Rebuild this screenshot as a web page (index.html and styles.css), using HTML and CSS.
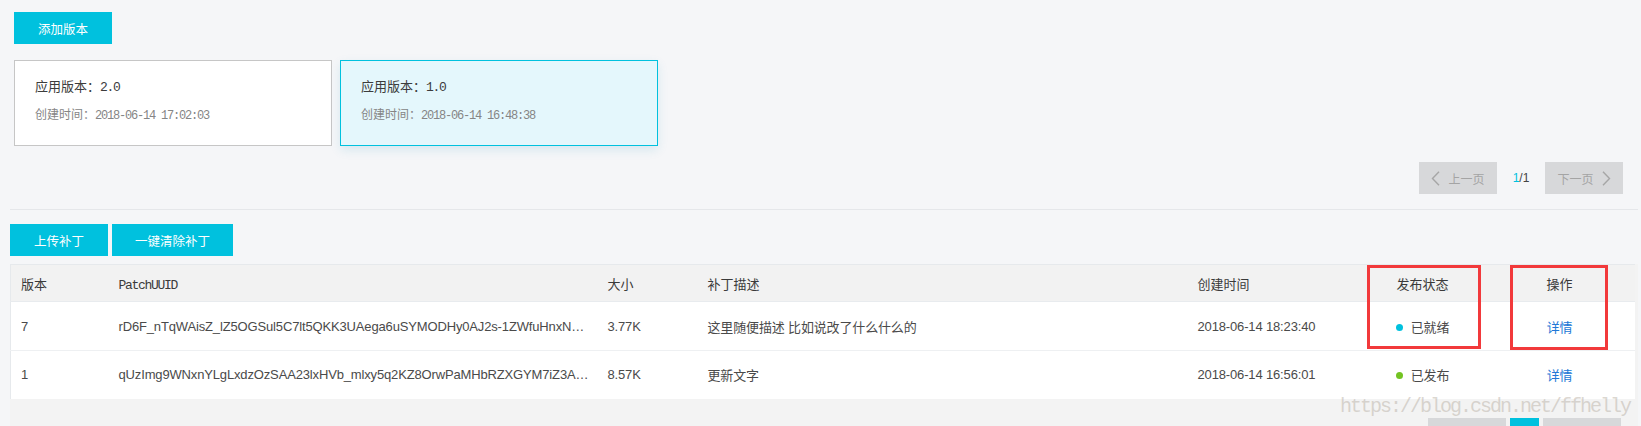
FILE: index.html
```html
<!DOCTYPE html>
<html lang="zh-CN">
<head>
<meta charset="utf-8">
<title>版本管理</title>
<link rel="stylesheet" href="styles.css">
</head>
<body>
<div class="page">
  <section class="versions">
    <button class="btn btn-add">添加版本</button>
    <div class="cards">
      <div class="card">
        <div class="card-title">应用版本：<span class="num">2.0</span></div>
        <div class="card-time">创建时间：<span class="num">2018-06-14 17:02:03</span></div>
      </div>
      <div class="card card-active">
        <div class="card-title">应用版本：<span class="num">1.0</span></div>
        <div class="card-time">创建时间：<span class="num">2018-06-14 16:48:38</span></div>
      </div>
    </div>
  </section>

  <div class="pager pager-top">
    <button class="pg-btn"><svg class="chev" width="9" height="15" viewBox="0 0 9 15"><path d="M8 0.8 L1.5 7.5 L8 14.2" fill="none" stroke="#a6a6a6" stroke-width="1.4"/></svg><span>上一页</span></button>
    <span class="pg-count"><em>1</em>/1</span>
    <button class="pg-btn"><span>下一页</span><svg class="chev" width="9" height="15" viewBox="0 0 9 15"><path d="M1 0.8 L7.5 7.5 L1 14.2" fill="none" stroke="#a6a6a6" stroke-width="1.4"/></svg></button>
  </div>

  <div class="divider"></div>

  <div class="actions">
    <button class="btn btn-upload">上传补丁</button>
    <button class="btn btn-clear">一键清除补丁</button>
  </div>

  <div class="grid-box">
    <table class="grid">
      <colgroup>
        <col class="c-ver"><col class="c-uuid"><col class="c-size"><col class="c-desc"><col class="c-time"><col class="c-status"><col class="c-op">
      </colgroup>
      <thead>
        <tr>
          <th>版本</th>
          <th><span class="num">PatchUUID</span></th>
          <th>大小</th>
          <th>补丁描述</th>
          <th>创建时间</th>
          <th class="center">发布状态</th>
          <th class="center">操作</th>
        </tr>
      </thead>
      <tbody>
        <tr>
          <td>7</td>
          <td class="uuid">rD6F_nTqWAisZ_lZ5OGSul5C7lt5QKK3UAega6uSYMODHy0AJ2s-1ZWfuHnxN…</td>
          <td>3.77K</td>
          <td>这里随便描述 比如说改了什么什么的</td>
          <td>2018-06-14 18:23:40</td>
          <td class="center"><span class="dot dot-ready"></span>已就绪</td>
          <td class="center"><a class="link">详情</a></td>
        </tr>
        <tr>
          <td>1</td>
          <td class="uuid">qUzImg9WNxnYLgLxdzOzSAA23lxHVb_mlxy5q2KZ8OrwPaMHbRZXGYM7iZ3A…</td>
          <td>8.57K</td>
          <td>更新文字</td>
          <td>2018-06-14 16:56:01</td>
          <td class="center"><span class="dot dot-done"></span>已发布</td>
          <td class="center"><a class="link">详情</a></td>
        </tr>
      </tbody>
    </table>
    <div class="mark mark-status"></div>
    <div class="mark mark-op"></div>

    <div class="pager pager-bottom">
      <button class="pg-btn" aria-label="上一页"></button>
      <button class="pg-num" aria-label="1"></button>
      <button class="pg-btn" aria-label="下一页"></button>
    </div>
  </div>

  <div class="watermark">https://blog.csdn.net/ffhelly</div>
</div>
</body>
</html>
```

FILE: styles.css
```css
* { box-sizing: border-box; }

html, body {
  margin: 0;
  padding: 0;
}

body {
  background: #f5f6f8;
  font-family: "Liberation Sans", "Noto Sans CJK SC", sans-serif;
  font-size: 13px;
  color: #333;
  overflow: hidden;
}

.page {
  position: relative;
  width: 1641px;
  height: 426px;
  overflow: hidden;
}

.num {
  font-family: "Liberation Mono", monospace;
  letter-spacing: -0.1em;
}

.btn {
  border: none;
  background: #00c1de;
  color: #fff;
  font-family: "Noto Sans CJK SC", sans-serif;
  font-size: 12.5px;
  height: 32px;
  padding: 0;
  cursor: pointer;
}

.versions {
  padding: 12px 0 0 14px;
}

.btn-add { width: 98px; }

.cards {
  display: flex;
  gap: 8px;
  margin-top: 16px;
}

.card {
  width: 318px;
  height: 86px;
  background: #fff;
  border: 1px solid #c6c6c6;
  padding: 15px 0 0 20px;
  font-family: "Noto Sans CJK SC", sans-serif;
}

.card-active {
  background: #e4f7fc;
  border-color: #00c1de;
  box-shadow: 0 4px 10px rgba(0, 140, 180, 0.12);
}

.card-title {
  font-size: 13px;
  line-height: 20px;
  color: #3c3c3c;
}

.card-time {
  margin-top: 7px;
  font-size: 12px;
  line-height: 18px;
  color: #858585;
}

.pager {
  display: flex;
  align-items: center;
  justify-content: flex-end;
}

.pager-top {
  margin-top: 16px;
  padding-right: 18px;
}

.pg-btn {
  width: 78px;
  height: 32px;
  border: none;
  background: #d7d8da;
  color: #a4a4a4;
  font-family: "Noto Sans CJK SC", sans-serif;
  font-size: 12px;
  display: flex;
  align-items: center;
  justify-content: center;
  gap: 8px;
  padding: 0;
}

.chev { display: block; }

.pg-count {
  width: 48px;
  text-align: center;
  font-family: "Liberation Sans", sans-serif;
  font-size: 12px;
  color: #444;
}

.pg-count em {
  font-style: normal;
  color: #00c1de;
}

.divider {
  height: 1px;
  background: #e5e7ea;
  margin: 15px 3px 0 10px;
}

.actions {
  display: flex;
  gap: 4px;
  padding-left: 10px;
  margin-top: 14px;
}

.btn-upload { width: 98px; }
.btn-clear { width: 121px; }

.grid-box {
  position: relative;
  margin: 8px 3px 0 10px;
  background: #f3f3f3;
  height: 162px;
  overflow: hidden;
}

.grid {
  width: 1624px;
  border-collapse: collapse;
  table-layout: fixed;
  background: #fff;
  border-left: 1px solid #e6e9ec;
  border-top: 1px solid #e6e9ec;
}

.c-ver { width: 98px; }
.c-uuid { width: 489px; }
.c-size { width: 100px; }
.c-desc { width: 490px; }
.c-time { width: 173px; }
.c-status { width: 124px; }
.c-op { width: 150px; }

.grid th {
  height: 37px;
  background: #f2f2f2;
  font-family: "Noto Sans CJK SC", sans-serif;
  font-weight: normal;
  font-size: 13px;
  color: #3a3a3a;
  text-align: left;
  padding: 0 10px;
  border-bottom: 1px solid #e8ebee;
}

.grid td {
  height: 49px;
  padding: 0 10px;
  font-size: 13px;
  color: #4a4a4a;
  border-bottom: 1px solid #eef0f2;
  white-space: nowrap;
  overflow: hidden;
  letter-spacing: -0.15px;
}

.grid tbody tr:last-child td { border-bottom: none; height: 48px; }

.grid td.uuid {
  text-overflow: clip;
}

.grid .center { text-align: center; }

.dot {
  display: inline-block;
  width: 7px;
  height: 7px;
  border-radius: 50%;
  margin-right: 8px;
  vertical-align: 1px;
}

.dot-ready { background: #00c1de; }
.dot-done { background: #73c322; }

.link {
  color: #2077d6;
  cursor: pointer;
}

.mark {
  position: absolute;
  top: 1px;
  border: 3px solid #f2393b;
}

.mark-status {
  left: 1357px;
  width: 114px;
  height: 84px;
}

.mark-op {
  left: 1500px;
  width: 98px;
  height: 85px;
}

.pager-bottom {
  margin-top: 19px;
  padding-right: 17px;
  gap: 4px;
}

.pg-num {
  width: 29px;
  height: 32px;
  border: none;
  background: #00c1de;
  padding: 0;
}

.watermark {
  position: absolute;
  left: 1340px;
  top: 396px;
  font-family: "Liberation Mono", monospace;
  font-size: 20px;
  line-height: 22px;
  letter-spacing: -2px;
  color: rgba(190, 182, 172, 0.55);
  white-space: nowrap;
  pointer-events: none;
}
```
